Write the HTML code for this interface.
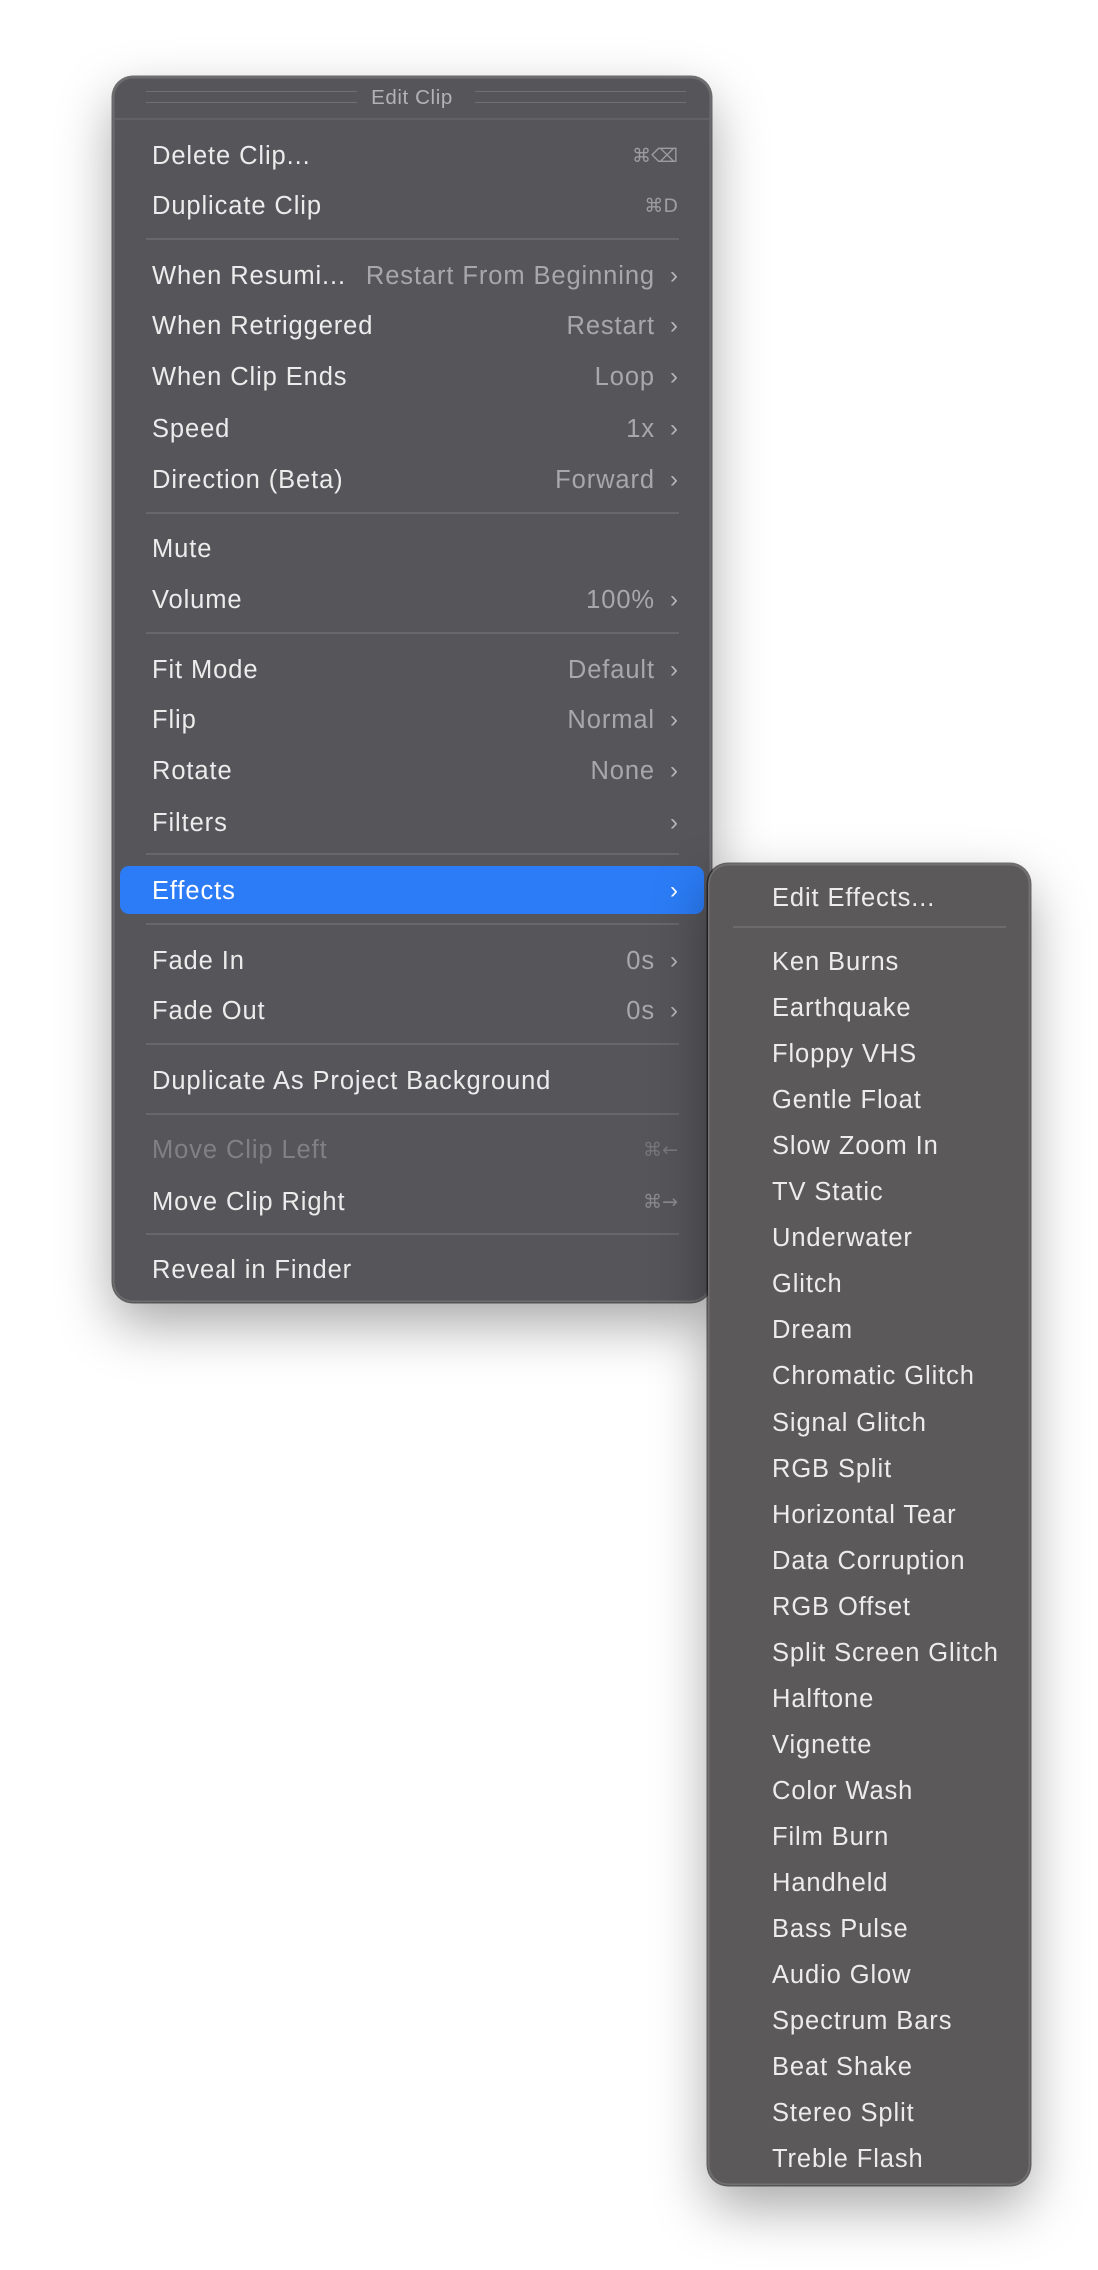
<!DOCTYPE html>
<html><head><meta charset="utf-8"><style>
*{margin:0;padding:0;box-sizing:border-box}
html,body{width:1098px;height:2270px;background:#fff;overflow:hidden}
body{position:relative;font-family:"Liberation Sans","DejaVu Sans",sans-serif}
.menu{position:absolute;border-radius:20px;box-shadow:0 0 0 1.5px rgba(0,0,0,.55),inset 0 0 0 1.5px rgba(255,255,255,.14),0 22px 55px rgba(0,0,0,.35)}
#m{left:113px;top:77px;width:598px;height:1225px;background:#56565a}
#s{left:708px;top:864px;width:322px;height:1321px;background:#5b5959}
.it{position:absolute;left:0;right:0;height:30px;line-height:30px;font-size:25.5px;color:#ececec;letter-spacing:.9px;white-space:nowrap;margin-top:2px}
#m .it .l{position:absolute;left:39px}
#m .it .v{position:absolute;right:56px;color:#a8a8ac}
#m .it .c{position:absolute;right:33px;color:#b5b5b8;font-size:24px;letter-spacing:0}
#m .it .k{position:absolute;right:33px;color:#9d9da1;font-family:"DejaVu Sans",sans-serif;font-size:19px;letter-spacing:0}
.sep{position:absolute;left:33px;right:32px;height:2px;background:#68686c}
#s .it .l{position:absolute;left:64px}
#s .sep{left:25px;right:24px;background:#6c6a6b}
.hl{position:absolute;left:7px;right:7px;top:789px;height:48px;background:#2b7cf6;border-radius:9px}
.title{position:absolute;left:0;right:0;top:8px;height:26px;text-align:center;font-size:20.5px;color:#b3b3b6;line-height:26px;letter-spacing:.6px}
.dl{position:absolute;top:14px;height:11.5px;border-top:1.5px solid #717175;border-bottom:1.5px solid #717175}
.ts{position:absolute;left:2px;right:2px;top:41px;height:2px;background:#626266}
.dis{color:#818185!important}
</style></head><body>
<div class="menu" id="m">
<div class="title">Edit Clip</div>
<div class="dl" style="left:33px;width:211px"></div>
<div class="dl" style="left:362px;width:211px"></div>
<div class="ts"></div>
<div class="hl"></div>
<div class="it" style="top:61.5px"><span class="l">Delete Clip...</span><span class="k">⌘⌫</span></div>
<div class="it" style="top:112px"><span class="l">Duplicate Clip</span><span class="k">⌘D</span></div>
<div class="sep" style="top:161px"></div>
<div class="it" style="top:181.7px"><span class="l">When Resumi...</span><span class="v">Restart From Beginning</span><span class="c">›</span></div>
<div class="it" style="top:232.4px"><span class="l">When Retriggered</span><span class="v">Restart</span><span class="c">›</span></div>
<div class="it" style="top:283px"><span class="l">When Clip Ends</span><span class="v">Loop</span><span class="c">›</span></div>
<div class="it" style="top:335px"><span class="l">Speed</span><span class="v">1x</span><span class="c">›</span></div>
<div class="it" style="top:386px"><span class="l">Direction (Beta)</span><span class="v">Forward</span><span class="c">›</span></div>
<div class="sep" style="top:434.6px"></div>
<div class="it" style="top:455px"><span class="l">Mute</span></div>
<div class="it" style="top:506px"><span class="l">Volume</span><span class="v">100%</span><span class="c">›</span></div>
<div class="sep" style="top:555px"></div>
<div class="it" style="top:575.5px"><span class="l">Fit Mode</span><span class="v">Default</span><span class="c">›</span></div>
<div class="it" style="top:626px"><span class="l">Flip</span><span class="v">Normal</span><span class="c">›</span></div>
<div class="it" style="top:677px"><span class="l">Rotate</span><span class="v">None</span><span class="c">›</span></div>
<div class="it" style="top:729px"><span class="l">Filters</span><span class="c">›</span></div>
<div class="sep" style="top:776px"></div>
<div class="it" style="top:797px;color:#fff"><span class="l">Effects</span><span class="c" style="color:#fff">›</span></div>
<div class="sep" style="top:846px"></div>
<div class="it" style="top:866.6px"><span class="l">Fade In</span><span class="v">0s</span><span class="c">›</span></div>
<div class="it" style="top:917px"><span class="l">Fade Out</span><span class="v">0s</span><span class="c">›</span></div>
<div class="sep" style="top:966px"></div>
<div class="it" style="top:987px"><span class="l">Duplicate As Project Background</span></div>
<div class="sep" style="top:1035.5px"></div>
<div class="it" style="top:1056px"><span class="l dis">Move Clip Left</span><span class="k" style="color:#77777b">⌘←</span></div>
<div class="it" style="top:1108px"><span class="l">Move Clip Right</span><span class="k" style="color:#8a8a8e">⌘→</span></div>
<div class="sep" style="top:1156px"></div>
<div class="it" style="top:1176px"><span class="l">Reveal in Finder</span></div>
</div>
<div class="menu" id="s">
<div class="it" style="top:17px"><span class="l">Edit Effects...</span></div>
<div class="sep" style="top:62px"></div>
<div class="it" style="top:81px"><span class="l">Ken Burns</span></div>
<div class="it" style="top:127px"><span class="l">Earthquake</span></div>
<div class="it" style="top:173px"><span class="l">Floppy VHS</span></div>
<div class="it" style="top:219px"><span class="l">Gentle Float</span></div>
<div class="it" style="top:265px"><span class="l">Slow Zoom In</span></div>
<div class="it" style="top:311px"><span class="l">TV Static</span></div>
<div class="it" style="top:357px"><span class="l">Underwater</span></div>
<div class="it" style="top:403px"><span class="l">Glitch</span></div>
<div class="it" style="top:449px"><span class="l">Dream</span></div>
<div class="it" style="top:495px"><span class="l">Chromatic Glitch</span></div>
<div class="it" style="top:541.5px"><span class="l">Signal Glitch</span></div>
<div class="it" style="top:587.5px"><span class="l">RGB Split</span></div>
<div class="it" style="top:633.5px"><span class="l">Horizontal Tear</span></div>
<div class="it" style="top:679.5px"><span class="l">Data Corruption</span></div>
<div class="it" style="top:725.5px"><span class="l">RGB Offset</span></div>
<div class="it" style="top:771.5px"><span class="l">Split Screen Glitch</span></div>
<div class="it" style="top:817.5px"><span class="l">Halftone</span></div>
<div class="it" style="top:864px"><span class="l">Vignette</span></div>
<div class="it" style="top:910px"><span class="l">Color Wash</span></div>
<div class="it" style="top:956px"><span class="l">Film Burn</span></div>
<div class="it" style="top:1002px"><span class="l">Handheld</span></div>
<div class="it" style="top:1048px"><span class="l">Bass Pulse</span></div>
<div class="it" style="top:1094px"><span class="l">Audio Glow</span></div>
<div class="it" style="top:1140px"><span class="l">Spectrum Bars</span></div>
<div class="it" style="top:1186px"><span class="l">Beat Shake</span></div>
<div class="it" style="top:1232px"><span class="l">Stereo Split</span></div>
<div class="it" style="top:1278px"><span class="l">Treble Flash</span></div>
</div>
</body></html>
